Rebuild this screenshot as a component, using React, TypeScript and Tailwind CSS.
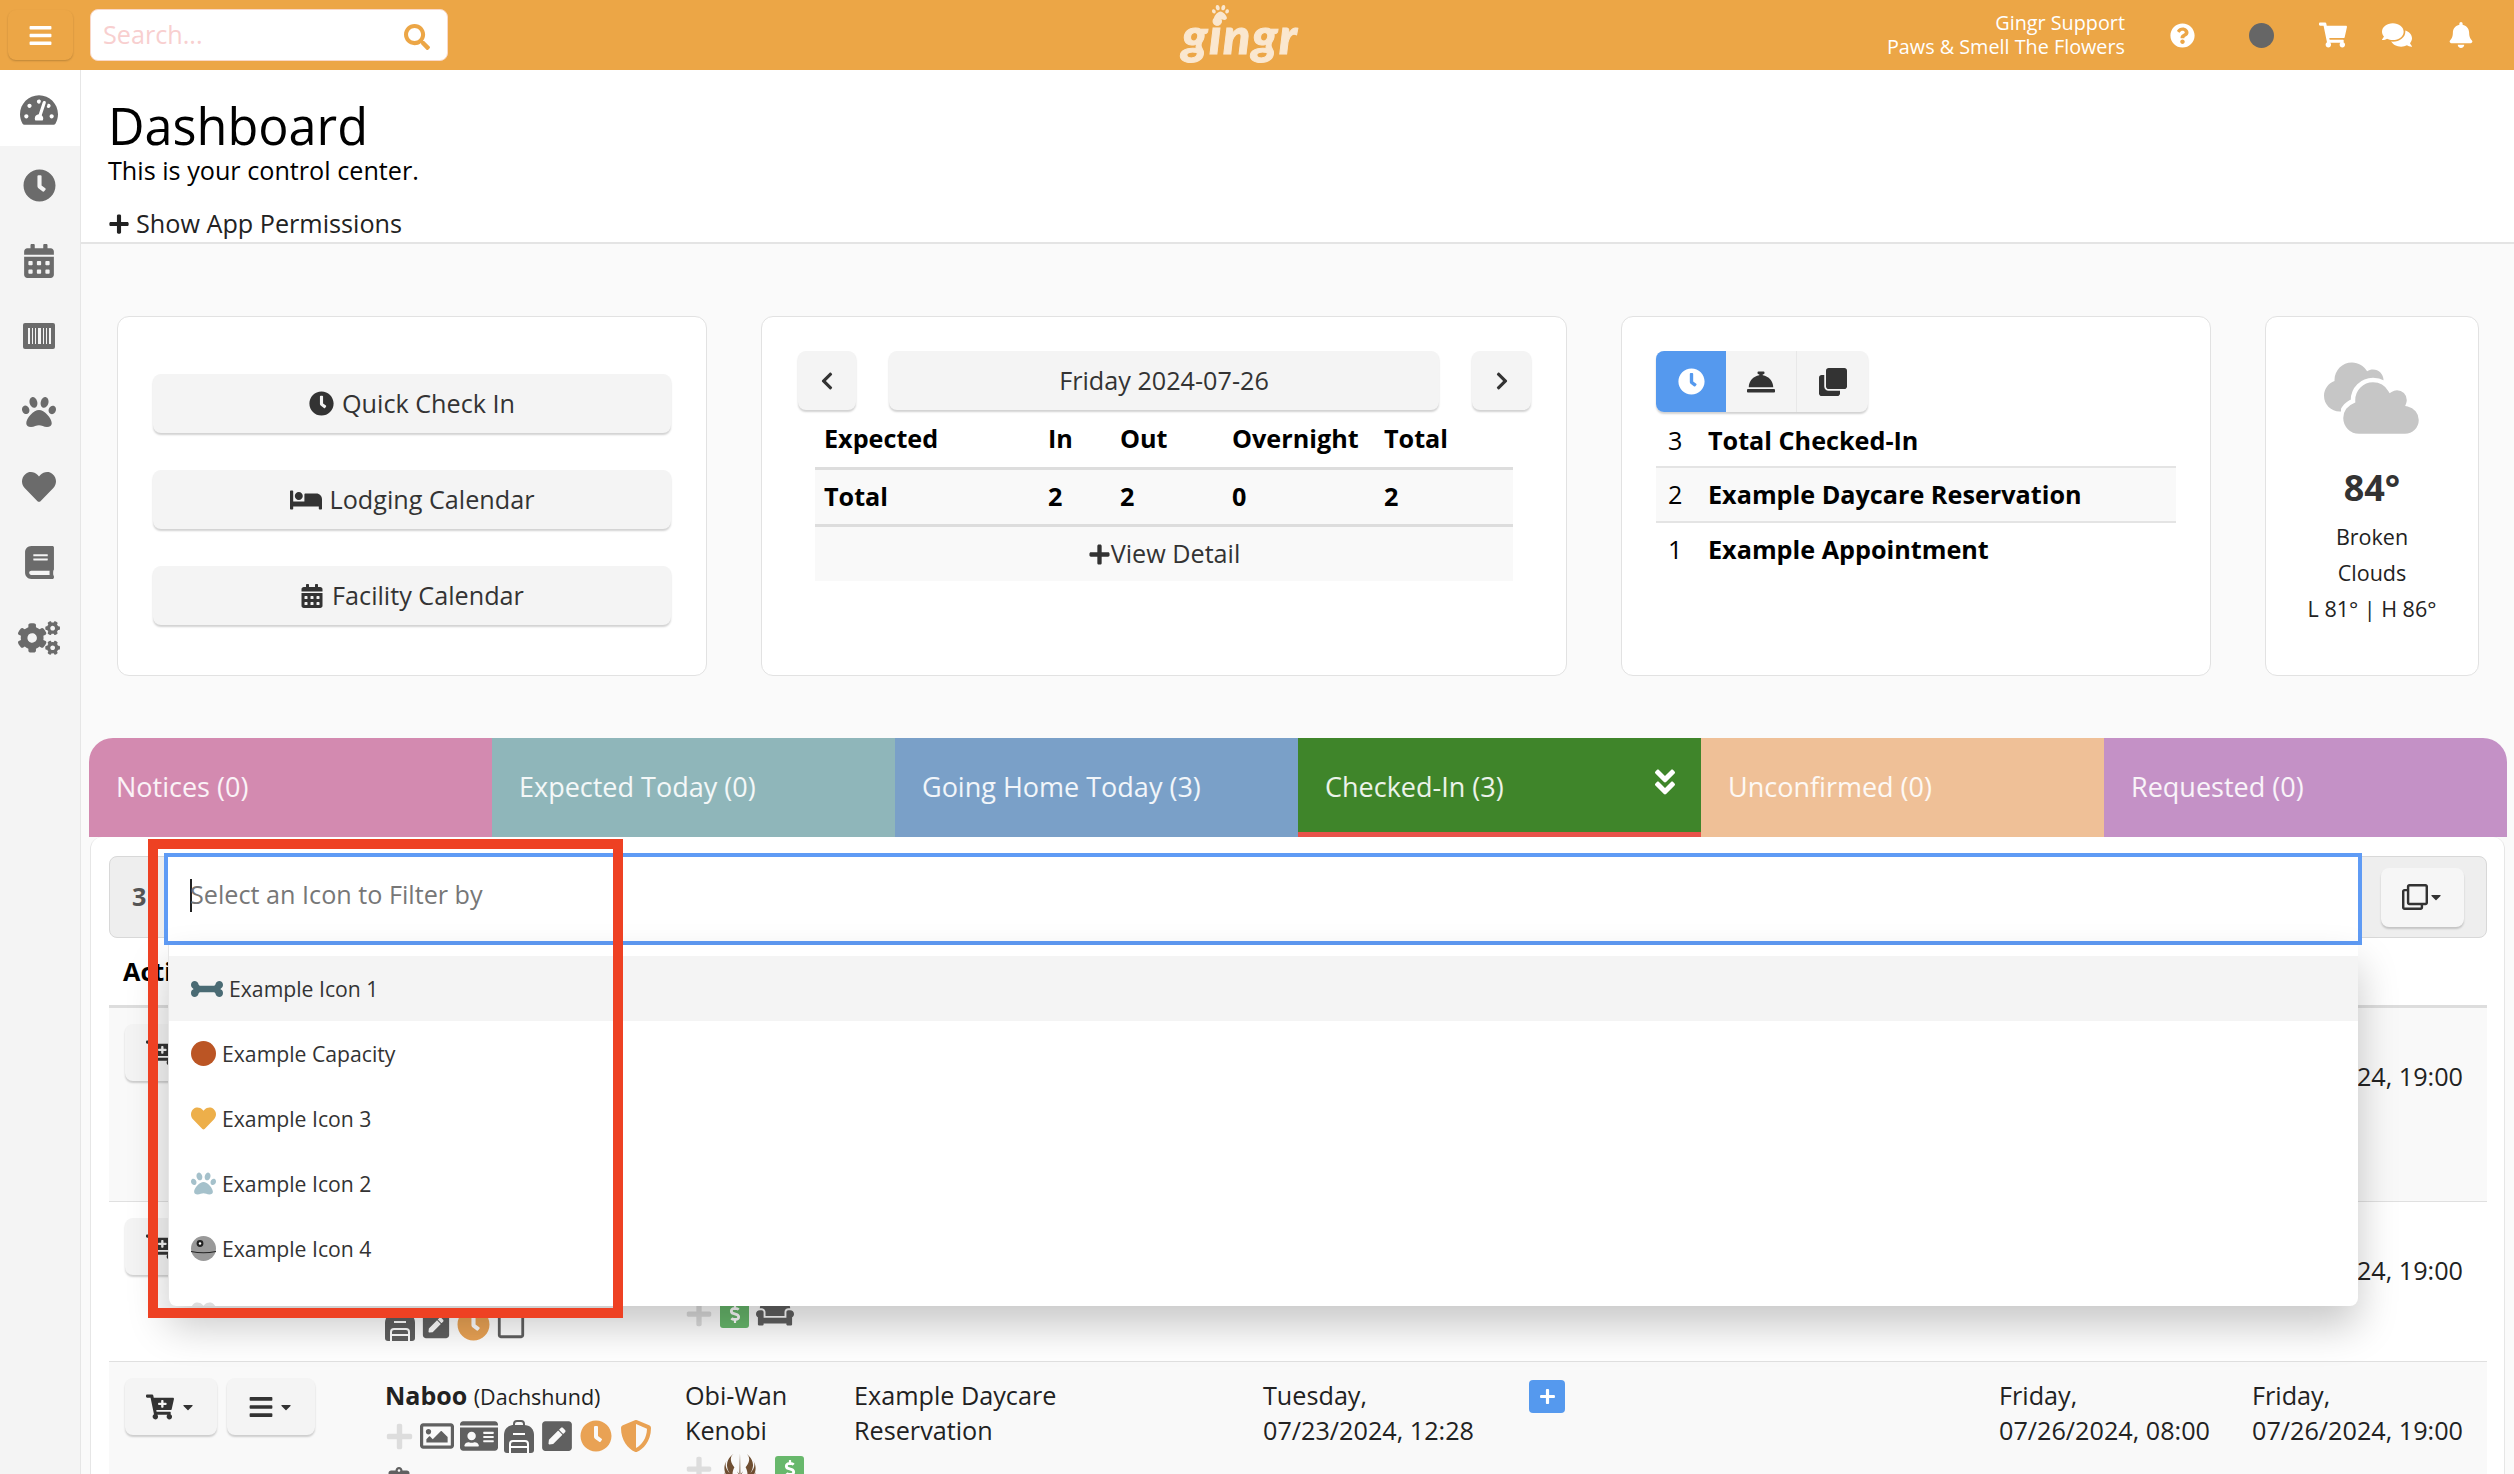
import { ReactNode } from "react"
import {
  FaAngleDoubleDown, FaBars, FaBed, FaBell, FaBone, FaBook, FaCalendarAlt, FaCaretDown, FaCartPlus,
  FaChevronLeft, FaChevronRight, FaClipboard, FaClock, FaClone, FaCloud, FaCogs, FaComments, FaConciergeBell, FaCouch,
  FaDollarSign, FaHeart, FaIdCard, FaJediOrder, FaPaw, FaPenSquare, FaPlus, FaQuestionCircle, FaRegClone,
  FaRegImage, FaRegSquare, FaSearch, FaShieldAlt, FaShoppingCart, FaTachometerAlt,
} from "react-icons/fa"

const tabs = [
  { label: "Notices (0)", bg: "bg-[#d38ab0] rounded-tl-[24px]" },
  { label: "Expected Today (0)", bg: "bg-[#8fb6ba]" },
  { label: "Going Home Today (3)", bg: "bg-[#7aa0c8]" },
  { label: "Checked-In (3)", bg: "bg-[#3f852a] pt-[5px] border-b-[5px] border-[#e8524a]", active: true },
  { label: "Unconfirmed (0)", bg: "bg-[#efc097]" },
  { label: "Requested (0)", bg: "bg-[#c491c6] rounded-tr-[24px]" },
]

const BarcodeBox = () => (
  <svg width="32" height="26" viewBox="0 0 32 26">
    <rect width="32" height="26" rx="2" fill="#6b6b6b" />
    <path d="M5 5h2v16H5zM9 5h1v16H9zM12 5h1v16h-1zM15 5h3v16h-3zM20 5h1v16h-1zM23 5h1v16h-1zM26 5h2v16h-2z" fill="#f4f4f4" />
  </svg>
)

const DeathStar = () => (
  <svg width="25" height="25" viewBox="0 0 25 25">
    <circle cx="12.5" cy="12.5" r="12.5" fill="#999" />
    <path d="M0 15.5c8 1.6 17 1.6 25 0" stroke="#222" strokeWidth="1.2" fill="none" />
    <circle cx="9" cy="7.5" r="3.4" fill="#222" />
    <circle cx="9" cy="7.5" r="1.2" fill="#fff" />
  </svg>
)

const Backpack = () => (
  <svg width="30" height="33" viewBox="0 0 30 33" className="shrink-0">
    <path d="M10 6V4a3 3 0 0 1 3-3h4a3 3 0 0 1 3 3v2" stroke="#606060" strokeWidth="2" fill="none" />
    <path d="M10 5h10c6 0 10 4 10 10v15a3 3 0 0 1-3 3H3a3 3 0 0 1-3-3V15C0 9 4 5 10 5z" fill="#606060" />
    <path d="M9 14h12" stroke="#fff" strokeWidth="2" />
    <path d="M6 33V24a3 3 0 0 1 3-3h12a3 3 0 0 1 3 3v9M6 27h18" stroke="#fff" strokeWidth="2" fill="none" />
  </svg>
)

const side = [
  <FaTachometerAlt size={38} />, <FaClock size={33} />, <FaCalendarAlt size={34} />, <BarcodeBox />,
  <FaPaw size={34} />, <FaHeart size={34} />, <FaBook size={33} />, <FaCogs size={42} />,
]

const options: { icon: ReactNode; label: string }[] = [
  { icon: <FaBone size={32} className="text-[#4a6b74]" />, label: "Example Icon 1" },
  { icon: <span className="block w-[25px] h-[25px] rounded-full bg-[#bb5524]" />, label: "Example Capacity" },
  { icon: <FaHeart size={25} className="text-[#edaf4a]" />, label: "Example Icon 3" },
  { icon: <FaPaw size={25} className="text-[#a5c1cb]" />, label: "Example Icon 2" },
  { icon: <DeathStar />, label: "Example Icon 4" },
  { icon: <FaHeart size={25} className="text-[#dddddd]" />, label: "Example Icon 5" },
]

const Soft = ({ className, children }: { className: string; children: ReactNode }) => (
  <div className={`flex items-center justify-center gap-2 bg-[#f4f4f4] rounded-lg shadow-[0_2px_2px_rgba(0,0,0,0.18)] text-[#333] ${className}`}>
    {children}
  </div>
)

const Money = () => (
  <span className="flex items-center justify-center w-[29px] h-[27px] rounded-[3px] bg-[#68b86c]">
    <FaDollarSign size={18} className="text-white" />
  </span>
)

const PetIcons = () => (
  <div className="flex items-center gap-[6px] text-[#606060] h-[34px] mt-[5px]">
    <FaPlus size={29} className="text-[#dddddd]" />
    <FaRegImage size={34} />
    <FaIdCard size={38} />
    <Backpack />
    <FaPenSquare size={34} />
    <FaClock size={32} className="text-[#e9a254]" />
    <FaShieldAlt size={32} className="ml-[2px] text-[#e9a254]" />
  </div>
)

const rows = [
  {
    h: "h-[194px]", bg: "bg-[#f9f9f9]", last: "07/26/2024, 19:00",
    pet: null, pet2: null, owner: null, ownerIcons: null,
  },
  {
    h: "h-[160px]", bg: "bg-white", last: "07/26/2024, 19:00",
    pet: null,
    pet2: (
      <div className="flex items-center gap-[6px] text-[#606060] mt-[90px]">
        <Backpack />
        <FaPenSquare size={30} />
        <FaClock size={33} className="text-[#e9a254]" />
        <FaRegSquare size={30} />
      </div>
    ),
    owner: null,
    ownerIcons: (
      <div className="flex items-center gap-[7px] text-[#606060] mt-[77px]">
        <FaPlus size={28} className="text-[#dddddd]" />
        <Money />
        <FaCouch size={38} />
      </div>
    ),
  },
  {
    h: "h-[200px]", bg: "bg-[#f9f9f9]", last: "07/26/2024, 19:00",
    pet: (
      <>
        <div className="leading-[35px]"><b className="text-[25px] font-bold">Naboo</b> <span className="text-[21.5px]">(Dachshund)</span></div>
        <PetIcons />
        <FaClipboard size={28} className="text-[#606060] mt-[14px]" />
      </>
    ),
    pet2: null,
    owner: "Obi-Wan Kenobi",
    ownerIcons: (
      <div className="flex items-center mt-[3px]">
        <FaPlus size={28} className="text-[#dddddd]" />
        <FaJediOrder size={36} className="ml-[9px] text-[#6f4e31]" />
        <span className="ml-[17px]"><Money /></span>
      </div>
    ),
  },
]

export default function App() {
  return (
    <div className="relative w-[2514px] h-[1474px] overflow-hidden bg-[#fafafa] font-['Open_Sans',sans-serif] text-[25.2px] text-black">
      <header className="flex items-center h-[70px] bg-[#eca646] pl-[8px]">
        <div className="flex items-center justify-center w-[65px] h-[50px] rounded-lg shadow-[0_1px_2px_rgba(0,0,0,0.2)]">
          <FaBars size={25} className="text-white" />
        </div>
        <div className="flex items-center justify-between w-[358px] h-[52px] ml-[17px] pl-[12px] pr-[17px] bg-white rounded-lg border border-[#f9d8c8]">
          <span className="text-[#f8cfcf]">Search...</span>
          <FaSearch size={26} className="mt-[3px] text-[#eca646]" />
        </div>
        <div className="relative ml-[734px] w-[116px] text-[50px] leading-[56px] italic font-black font-['Lato',sans-serif] text-[#fae7cf] tracking-[1.5px] [-webkit-text-stroke:1px_#fae7cf]">
          gingr
          <FaPaw size={17} className="absolute left-[30px] top-[-3px] text-[#fae7cf]" />
        </div>
        <div className="ml-auto flex items-center pr-[40px] text-white">
          <div className="text-right text-[19.8px] leading-[24px]">
            <div>Gingr Support</div>
            <div>Paws &amp; Smell The Flowers</div>
          </div>
          <FaQuestionCircle size={25} className="ml-[45px]" />
          <span className="ml-[54px] w-[25px] h-[25px] rounded-full bg-[#666]" />
          <FaShoppingCart size={28} className="ml-[45px]" />
          <FaComments size={30} className="ml-[35px]" />
          <FaBell size={26} className="ml-[36px]" />
        </div>
      </header>

      <div className="flex h-[1404px]">
        <nav className="flex flex-col w-[81px] bg-[#f4f4f4] border-r border-[#e6e6e6] text-[#6b6b6b]">
          {side.map((icon, i) => (
            <div key={i} className={`flex items-center justify-center h-[75.5px] pt-[4px] pr-[2px] ${i === 0 ? "bg-white" : ""}`}>{icon}</div>
          ))}
        </nav>

        <main className="flex-1 min-w-0">
          <section className="h-[174px] bg-white border-b-2 border-[#e4e4e4] pl-[27px] pt-[25px]">
            <h1 className="text-[50.4px] leading-[62px]">Dashboard</h1>
            <p className="leading-[27px]">This is your control center.</p>
            <div className="flex items-center gap-[6px] mt-[26px] leading-[27px] text-[#222]"><FaPlus size={22} /> Show App Permissions</div>
          </section>

          <div className="flex gap-[54px] pl-[36px] pt-[72px]">
            <div className="flex flex-col gap-[37px] w-[590px] h-[360px] pt-[57px] px-[35px] bg-white border border-[#e2e2e2] rounded-xl">
              <Soft className="h-[59px]"><FaClock size={25} className="text-[#333]" /> Quick Check In</Soft>
              <Soft className="h-[59px]"><FaBed size={32} className="text-[#333]" /> Lodging Calendar</Soft>
              <Soft className="h-[59px]"><FaCalendarAlt size={24} className="text-[#333]" /> Facility Calendar</Soft>
            </div>

            <div className="w-[806px] h-[360px] pt-[34px] pl-[36px] bg-white border border-[#e2e2e2] rounded-xl">
              <div className="flex gap-[33px]">
                <Soft className="w-[58px] h-[59px]"><FaChevronLeft size={20} /></Soft>
                <Soft className="w-[550px] h-[59px]">Friday 2024-07-26</Soft>
                <Soft className="w-[59px] h-[59px]"><FaChevronRight size={20} /></Soft>
              </div>
              <div className="w-[698px] ml-[17px] font-bold">
                <div className="grid grid-cols-[224px_72px_112px_152px_1fr] items-center h-[60px] pl-[9px] border-b-[3px] border-[#dddddd]">
                  <span>Expected</span><span>In</span><span>Out</span><span>Overnight</span><span>Total</span>
                </div>
                <div className="grid grid-cols-[224px_72px_112px_152px_1fr] items-center h-[57px] pl-[9px] bg-[#f9f9f9] border-b-[3px] border-[#dddddd]">
                  <span>Total</span><span>2</span><span>2</span><span>0</span><span>2</span>
                </div>
                <div className="flex items-center justify-center h-[54px] bg-[#f9f9f9] font-normal text-[#333]"><FaPlus size={23} />View Detail</div>
              </div>
            </div>

            <div className="w-[590px] h-[360px] pt-[34px] pl-[34px] bg-white border border-[#e2e2e2] rounded-xl">
              <div className="flex w-[212px] h-[61px] rounded-lg overflow-hidden shadow-[0_2px_2px_rgba(0,0,0,0.18)] bg-[#f4f4f4] text-[#333]">
                <div className="flex items-center justify-center w-[70px] bg-[#5599ee]"><FaClock size={27} className="text-white" /></div>
                <div className="flex items-center justify-center w-[71px] border-r border-[#e8e8e8]"><FaConciergeBell size={28} /></div>
                <div className="flex items-center justify-center w-[71px]"><FaClone size={28} /></div>
              </div>
              <div className="w-[520px]">
                <div className="flex items-center h-[56px] pt-[3px] border-b-2 border-[#e4e4e4]"><span className="w-[52px] pl-[12px]">3</span><b>Total Checked-In</b></div>
                <div className="flex items-center h-[55px] pt-[1px] border-b-2 border-[#e4e4e4] bg-[#f9f9f9]"><span className="w-[52px] pl-[12px]">2</span><b>Example Daycare Reservation</b></div>
                <div className="flex items-center h-[54px]"><span className="w-[52px] pl-[12px]">1</span><b>Example Appointment</b></div>
              </div>
            </div>

            <div className="flex flex-col items-center w-[214px] h-[360px] pt-[49px] bg-white border border-[#e2e2e2] rounded-xl">
              <div className="relative w-[96px] h-[78px] text-[#c6c6c6]">
                <FaCloud size={70} className="absolute left-0 top-[-14px]" />
                <FaCloud size={80} stroke="white" strokeWidth={36} className="absolute left-[17px] top-[2px]" />
              </div>
              <div className="mt-[21px] text-[36px] leading-[46px] font-bold text-[#333]">84°</div>
              <div className="mt-[8px] text-[21.5px] leading-[36px] text-center text-[#222]">
                Broken<br />Clouds<br />L 81° | H 86°
              </div>
            </div>
          </div>

          <div className="grid grid-cols-6 w-[2418px] ml-[8px] mt-[62px]">
            {tabs.map((t) => (
              <div key={t.label} className={`flex items-center justify-between h-[99px] pl-[27px] pr-[20px] text-[27px] text-white/90 ${t.bg}`}>
                <span>{t.label}</span>
                {t.active && <FaAngleDoubleDown size={32} className="mb-[11px] text-white" />}
              </div>
            ))}
          </div>

          <div className="w-[2415px] ml-[9px] h-[700px] pt-[19px] px-[18px] bg-white border-l border-r border-[#e6e6e6] rounded-t-xl">
            <div className="flex items-center justify-between h-[82px] pl-[22px] pr-[22px] bg-[#eeeeee] border border-[#d8d8d8] rounded-lg w-[2378px]">
              <b className="text-[#555]">3</b>
              <Soft className="w-[83px] h-[59px] !gap-0 !bg-[#f6f6f6]"><FaRegClone size={26} /><FaCaretDown size={16} /></Soft>
            </div>
            <div className="w-[2378px] h-[70px] flex items-center pl-[14px] border-b-[3px] border-[#dddddd] font-bold">Actions</div>
            {rows.map((r, i) => (
              <div key={i} className={`grid grid-cols-[276px_300px_169px_409px_266px_470px_253px_1fr] w-[2378px] ${r.h} ${r.bg} border-b border-[#e0e0e0] pt-[16px] leading-[35px] text-[#222]`}>
                <div className="flex gap-[10px] pl-[16px] items-start">
                  <Soft className="w-[92px] h-[57px] !gap-[6px]"><FaCartPlus size={28} /><FaCaretDown size={16} /></Soft>
                  <Soft className="w-[88px] h-[57px] !gap-[4px]"><FaBars size={26} /><FaCaretDown size={16} /></Soft>
                </div>
                <div>{r.pet}{r.pet2}</div>
                <div>
                  {r.owner && <div className="w-[130px]">{r.owner}</div>}
                  {r.ownerIcons}
                </div>
                <div>{r.owner && <div className="w-[240px]">Example Daycare Reservation</div>}</div>
                <div>{r.owner && <>Tuesday,<br />07/23/2024, 12:28</>}</div>
                <div>
                  {r.owner && (
                    <span className="flex items-center justify-center w-[36px] h-[33px] rounded-[4px] bg-[#5599ee] mt-[2px]"><FaPlus size={17} className="text-white" /></span>
                  )}
                </div>
                <div>{r.owner && <>Friday,<br />07/26/2024, 08:00</>}</div>
                <div>Friday,<br />{r.last}</div>
              </div>
            ))}
          </div>
        </main>
      </div>

      <div className="absolute left-[164px] top-[853px] flex items-center w-[2198px] h-[92px] pl-[22px] pb-[8px] bg-white border-[4px] border-[#5f9bf5] text-[#777]">
        <span className="w-[2px] h-[33px] -mr-[2px] bg-[#222]" />
        Select an Icon to Filter by
      </div>

      <div className="absolute left-[168px] top-[945px] w-[2190px] h-[361px] pt-[11px] overflow-hidden bg-white rounded-b-lg border-l border-[#e6e6e6] shadow-[0_20px_40px_rgba(0,0,0,0.22)]">
        {options.map((o, i) => (
          <div key={o.label} className={`flex items-center gap-[6px] h-[65px] pl-[22px] text-[21.2px] text-[#333] ${i === 0 ? "bg-[#f4f4f4]" : ""}`}>
            {o.icon}
            <span>{o.label}</span>
          </div>
        ))}
      </div>

      <div className="absolute left-[148px] top-[839px] w-[475px] h-[479px] border-[10px] border-[#ee4123]" />
    </div>
  )
}
